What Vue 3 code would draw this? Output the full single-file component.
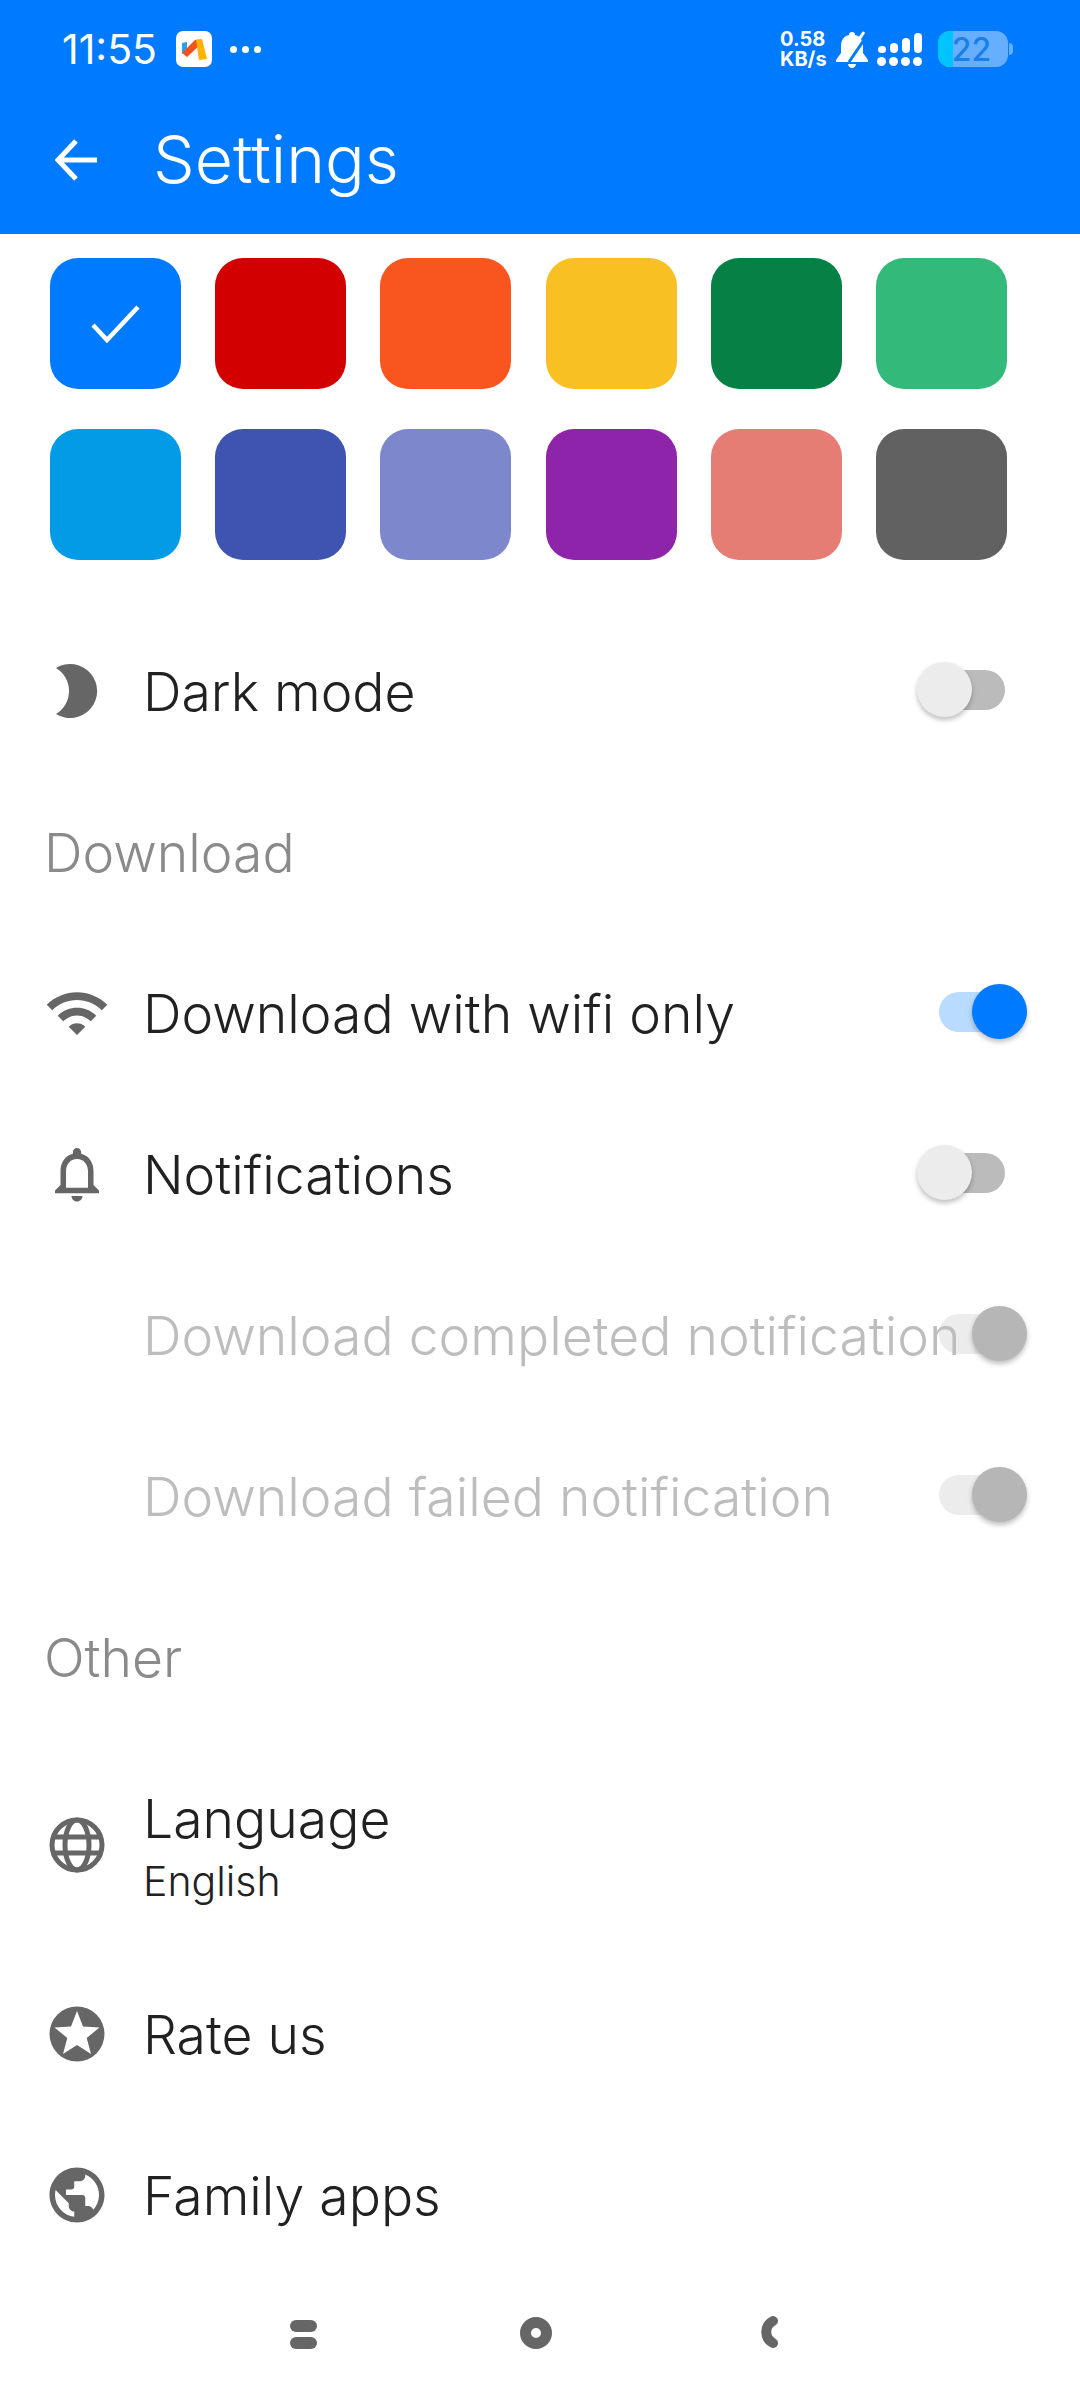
<script setup>
const swatches = [
  '#007aff', '#d20000', '#f8551f', '#f8c023', '#078045', '#33ba7b',
  '#039be5', '#3f53b1', '#7c88cb', '#8e24aa', '#e67d74', '#616161'
]
</script>

<template>
  <div class="screen">
    <header class="appbar">
      <div class="status">
        <div class="status-left">
          <span class="time">11:55</span>
          <svg class="app-badge" viewBox="0 0 36 36">
            <rect width="36" height="36" rx="7" fill="#fff" />
            <path d="M6 12l5-1v8l-5 4z" fill="#2aa4e6" />
            <path d="M6 22L19 9l3 0 2 5-13 12z" fill="#f4511e" />
            <path d="M20 8.500l6-.5 5 20-8 1z" fill="#ffb300" />
          </svg>
          <span class="dots"><i></i><i></i><i></i></span>
        </div>
        <div class="status-right">
          <div class="speed"><span>0.58</span><span>KB/s</span></div>
          <svg class="mute" viewBox="0 0 32 37">
            <path d="M16 1c2 0 3 1 3 3 5 1 8 5 8 11v7l5 7v2H0v-2l5-7v-7C5 9 8 5 13 4c0-2 1-3 3-3z" fill="#fff" />
            <path d="M12 33h8c0 2-2 4-4 4s-4-2-4-4z" fill="#fff" />
            <path d="M32 3L13 31" stroke="#007aff" stroke-width="3" />
            <path d="M28 1L11 26" stroke="#fff" stroke-width="3" />
          </svg>
          <div class="signal">
            <div v-for="(h, i) in [7, 10, 15, 20]" :key="i" class="sig-col">
              <span class="sig-bar" :style="{ height: h + 'px' }"></span>
              <span class="sig-dot"></span>
            </div>
          </div>
          <div class="battery">
            <div class="battery-body"><span class="charge"></span><span class="level">22</span></div>
            <span class="nub"></span>
          </div>
        </div>
      </div>
      <div class="titlebar">
        <svg class="back" viewBox="0 0 44 44">
          <path d="M42 22H4M21 3L3 22l18 19" fill="none" stroke="#fff" stroke-width="5" />
        </svg>
        <h1>Settings</h1>
      </div>
    </header>

    <div class="swatches">
      <div v-for="c in swatches" :key="c" class="swatch" :style="{ background: c }">
        <svg v-if="c === '#007aff'" viewBox="0 0 50 38" class="tick">
          <path d="M2 20l14 15L47 2" fill="none" stroke="#fff" stroke-width="4.500" />
        </svg>
      </div>
    </div>

    <div class="row">
      <svg class="icon" viewBox="0 0 66 66"><path d="M12 10A27 27 0 1 1 12 56A26.8 26.8 0 0 0 12 10z" /></svg>
      <span class="label">Dark mode</span>
      <span class="toggle off"><i></i></span>
    </div>

    <div class="section">Download</div>

    <div class="row">
      <svg class="icon" viewBox="0 0 24 24"><path d="M1 9l2 2c4.97-4.97 13.03-4.97 18 0l2-2C16.93 2.93 7.08 2.93 1 9zm8 8l3 3 3-3c-1.65-1.66-4.34-1.66-6 0zm-4-4l2 2c2.76-2.76 7.24-2.76 10 0l2-2C15.14 9.14 8.87 9.14 5 13z" /></svg>
      <span class="label">Download with wifi only</span>
      <span class="toggle on"><i></i></span>
    </div>
    <div class="row">
      <svg class="icon" viewBox="0 0 24 24"><path d="M12 22c1.1 0 2-.9 2-2h-4c0 1.1.89 2 2 2zm6-6v-5c0-3.07-1.64-5.64-4.5-6.32V4c0-.83-.67-1.5-1.5-1.5s-1.5.67-1.5 1.5v.68C7.63 5.36 6 7.92 6 11v5l-2 2v1h16v-1l-2-2zm-2 1H8v-6c0-2.48 1.51-4.5 4-4.5s4 2.02 4 4.5v6z" /></svg>
      <span class="label">Notifications</span>
      <span class="toggle off"><i></i></span>
    </div>
    <div class="row">
      <span class="icon"></span>
      <span class="label muted">Download completed notification</span>
      <span class="toggle dis"><i></i></span>
    </div>
    <div class="row">
      <span class="icon"></span>
      <span class="label muted">Download failed notification</span>
      <span class="toggle dis"><i></i></span>
    </div>

    <div class="section">Other</div>

    <div class="row tall">
      <svg class="icon" viewBox="0 0 66 66">
        <g fill="none" stroke="#666" stroke-width="5">
          <circle cx="33" cy="33" r="25" />
          <ellipse cx="33" cy="33" rx="12" ry="25" />
          <path d="M9 25h48M9 41h48" />
        </g>
      </svg>
      <div class="two-line">
        <span class="label">Language</span>
        <span class="sub">English</span>
      </div>
    </div>
    <div class="row">
      <svg class="icon" viewBox="0 0 66 66">
        <circle cx="33" cy="33" r="27.5" />
        <path d="M33 10l6 15.500 16.500 1-12.800 10.500 4.300 16L33 44l-14 9 4.300-16L10.500 26.500l16.500-1z" fill="#fff" />
      </svg>
      <span class="label">Rate us</span>
    </div>
    <div class="row">
      <svg class="icon" viewBox="0 0 24 24"><path d="M12 2C6.480 2 2 6.480 2 12s4.480 10 10 10 10-4.480 10-10S17.520 2 12 2zm-1 17.930c-3.950-.49-7-3.850-7-7.930 0-.62.08-1.210.21-1.790L9 15v1c0 1.100.9 2 2 2v1.930zm6.900-2.540c-.26-.81-1-1.390-1.900-1.390h-1v-3c0-.55-.45-1-1-1H8v-2h2c.55 0 1-.45 1-1V7h2c1.100 0 2-.9 2-2v-.41c2.930 1.190 5 4.060 5 7.410 0 2.080-.8 3.970-2.100 5.390z" /></svg>
      <span class="label">Family apps</span>
    </div>

    <nav class="navbar">
      <span class="nav-menu"><i></i><i></i></span>
      <span class="nav-home"></span>
      <svg class="nav-back" viewBox="0 0 18 34">
        <path d="M13 6C4 11 4 23 13 28" fill="none" stroke="#666" stroke-width="10" stroke-linecap="round" />
      </svg>
    </nav>
  </div>
</template>

<style scoped>
.screen {
  width: 1080px;
  height: 2400px;
  background: #fff;
  overflow: hidden;
  font-family: Inter, "Noto Sans", sans-serif;
  color: #212121;
}

.appbar {
  height: 234px;
  background: #007aff;
  color: #fff;
}

.status {
  height: 92px;
  padding: 6px 67px 0 62px;
  box-sizing: border-box;
  display: flex;
  align-items: center;
  justify-content: space-between;
}

.status-left,
.status-right {
  display: flex;
  align-items: center;
}

.time {
  font-size: 41px;
  font-weight: 400;
  line-height: 1;
  width: 114px;
}

.app-badge {
  width: 36px;
  height: 36px;
}

.dots {
  display: flex;
  gap: 5px;
  margin-left: 18px;
}

.dots i {
  width: 7px;
  height: 7px;
  border-radius: 50%;
  background: #fff;
}

.speed {
  display: flex;
  flex-direction: column;
  font-size: 20px;
  font-weight: 700;
  line-height: 20px;
  width: 56px;
}

.mute {
  width: 32px;
  height: 37px;
}

.signal {
  display: flex;
  gap: 3px;
  margin-left: 9px;
  height: 33px;
  align-items: flex-end;
}

.sig-col {
  display: flex;
  flex-direction: column;
  align-items: center;
  gap: 4px;
}

.sig-bar {
  width: 8px;
  border-radius: 4px;
  background: #fff;
}

.sig-dot {
  width: 9px;
  height: 9px;
  border-radius: 50%;
  background: #fff;
}

.battery {
  display: flex;
  align-items: center;
  margin-left: 16px;
}

.battery-body {
  position: relative;
  width: 70px;
  height: 36px;
  border-radius: 12px;
  overflow: hidden;
  background: #66afff;
  display: flex;
  align-items: center;
  justify-content: center;
}

.charge {
  position: absolute;
  left: 0;
  top: 0;
  bottom: 0;
  width: 15px;
  background: #00c3ff;
}

.level {
  position: relative;
  font-size: 32px;
  font-weight: 500;
  color: #1b7fe8;
  margin-right: 3px;
}

.nub {
  width: 4px;
  height: 12px;
  border-radius: 0 6px 6px 0;
  background: #66afff;
  margin-left: 1px;
}

.titlebar {
  height: 142px;
  display: flex;
  align-items: center;
  padding: 0 0 6px 55px;
  box-sizing: border-box;
}

.back {
  width: 44px;
  height: 44px;
}

h1 {
  margin: 0 0 3px 54px;
  font-size: 66px;
  font-weight: 350;
  line-height: 1;
}

.swatches {
  display: grid;
  grid-template-columns: repeat(6, 131px);
  column-gap: 34.200px;
  row-gap: 40px;
  padding: 24px 0 50px 50px;
}

.swatch {
  height: 131px;
  border-radius: 28px;
  display: flex;
  align-items: center;
  justify-content: center;
}

.tick {
  width: 50px;
  height: 38px;
}

.row {
  height: 161px;
  display: flex;
  align-items: center;
  padding-left: 44px;
  position: relative;
}

.row.tall {
  height: 216px;
}

.icon {
  width: 66px;
  height: 66px;
  flex: none;
  fill: #666;
  margin-right: 33px;
}

.label {
  position: relative;
  z-index: 1;
  margin-top: 3px;
  font-size: 53.500px;
  font-weight: 350;
  white-space: nowrap;
  line-height: 1.2;
}

.muted {
  color: #bdbdbd;
}

.section {
  height: 161px;
  display: flex;
  align-items: center;
  padding: 2px 0 0 44px;
  box-sizing: border-box;
  font-size: 53.500px;
  font-weight: 350;
  color: #8a8a8a;
}

.two-line {
  display: flex;
  flex-direction: column;
}

.sub {
  font-size: 41px;
  font-weight: 350;
  line-height: 1.2;
  margin-top: 5px;
}

.toggle {
  position: absolute;
  left: 939px;
  top: 60px;
  width: 66px;
  height: 40px;
  border-radius: 20px;
}

.toggle i {
  position: absolute;
  top: -8px;
  width: 55px;
  height: 55px;
  border-radius: 50%;
  box-shadow: 0 3px 5px rgba(0, 0, 0, 0.25);
}

.toggle.off {
  background: #bbb;
}

.toggle.off i {
  left: -22px;
  background: #ececec;
}

.toggle.on {
  background: #b8dbff;
}

.toggle.on i {
  left: 33px;
  background: #007aff;
}

.toggle.dis {
  background: #ececec;
}

.toggle.dis i {
  left: 33px;
  background: #b6b6b6;
}

.navbar {
  height: 125px;
  position: relative;
}

.nav-menu {
  position: absolute;
  left: 290px;
  top: 45px;
  display: flex;
  flex-direction: column;
  gap: 5px;
}

.nav-menu i {
  width: 27px;
  height: 12px;
  border-radius: 6px;
  background: #666;
}

.nav-home {
  position: absolute;
  left: 520px;
  top: 42px;
  width: 10px;
  height: 10px;
  border: 11px solid #666;
  border-radius: 50%;
}

.nav-back {
  position: absolute;
  left: 760px;
  top: 40px;
  width: 18px;
  height: 34px;
}
</style>

<style>
html,
body {
  margin: 0;
  background: #fff;
}
</style>
